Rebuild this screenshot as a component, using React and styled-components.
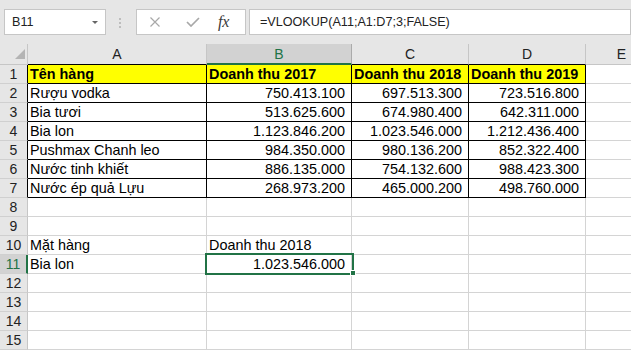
import styled, { createGlobalStyle } from 'styled-components'

const GlobalStyle = createGlobalStyle`
    body {
        margin: 0;
        background: #fff;
        overflow: hidden;
    }
`

const Shell = styled.div`
    width: 631px;
    height: 350px;
    overflow: hidden;
    background: #fff;
    font-family: "Liberation Sans", Arial, sans-serif;
`

const FormulaBar = styled.div`
    display: flex;
    align-items: flex-start;
    height: 44px;
    box-sizing: border-box;
    padding: 9px 0 0 4px;
    background: #e6e6e6;
`

const NameBox = styled.div`
    width: 102px;
    height: 26px;
    box-sizing: border-box;
    border: 1px solid #c6c6c6;
    background: #fff;
    display: flex;
    align-items: center;
    justify-content: space-between;
    padding: 0 7px 0 7px;
    font-size: 12.6px;
    color: #222;
`

const DropArrow = styled.span`
    width: 0;
    height: 0;
    border-left: 3px solid transparent;
    border-right: 3px solid transparent;
    border-top: 3px solid #666;
`

const Grip = styled.div`
    display: flex;
    flex-direction: column;
    gap: 2px;
    margin: 9px 0 0 13px;
`

const Dot = styled.span`
    width: 2px;
    height: 2px;
    background: #bdbdbd;
`

const ButtonGroup = styled.div`
    width: 110px;
    height: 26px;
    box-sizing: border-box;
    margin-left: 15px;
    border: 1px solid #c6c6c6;
    background: #fff;
    display: flex;
    align-items: center;
`

const IconSlot = styled.span`
    display: flex;
    align-items: center;
    margin-left: ${p => p.$gap}px;
`

const Fx = styled.span`
    font-family: "Liberation Serif", "Times New Roman", serif;
    font-style: italic;
    font-size: 16px;
    color: #3a3a3a;
    letter-spacing: -0.3px;
`

const FormulaInput = styled.div`
    flex: 1;
    height: 26px;
    box-sizing: border-box;
    margin-left: 3px;
    border: 1px solid #c6c6c6;
    background: #fff;
    display: flex;
    align-items: center;
    padding-left: 10px;
    font-size: 12.6px;
    color: #222;
    white-space: nowrap;
`

const Sheet = styled.div`
    display: grid;
    grid-template-columns: 28px 179px 145px 117px 117px 72px;
    grid-auto-rows: 19px;
    grid-template-rows: 21px;
    width: 658px;
`

const Corner = styled.div`
    box-sizing: border-box;
    background: #e6e6e6;
    border-right: 1px solid #c6c6c6;
    border-bottom: 1px solid #c6c6c6;
    display: flex;
    justify-content: flex-end;
    align-items: flex-end;
    padding: 0 2px 5px 0;
`

const ColHead = styled.div`
    box-sizing: border-box;
    background: ${p => (p.$active ? '#d2d2d2' : '#e6e6e6')};
    color: ${p => (p.$active ? '#217346' : '#222')};
    border-right: 1px solid ${p => (p.$active ? '#ababab' : '#c6c6c6')};
    border-bottom: ${p => (p.$active ? '2px solid #217346' : `1px solid ${p.$edge || '#c6c6c6'}`)};
    display: flex;
    align-items: center;
    justify-content: center;
    font-size: 14px;
`

const RowHead = styled.div`
    box-sizing: border-box;
    background: ${p => (p.$active ? '#d2d2d2' : '#e6e6e6')};
    color: ${p => (p.$active ? '#217346' : '#222')};
    border-right: ${p => (p.$active ? '2px solid #217346' : `1px solid ${p.$edge || '#c6c6c6'}`)};
    border-bottom: 1px solid #d0d0d0;
    display: flex;
    align-items: center;
    justify-content: center;
    font-size: 14px;
    line-height: 18px;
`

const Cell = styled.div`
    position: relative;
    box-sizing: border-box;
    border-right: 1px solid ${p => (p.$boxed ? '#000' : '#d4d4d4')};
    border-bottom: 1px solid ${p => (p.$boxed ? '#000' : '#d4d4d4')};
    background: ${p => p.$fill || '#fff'};
    font-weight: ${p => (p.$bold ? 700 : 400)};
    text-align: ${p => (p.$right ? 'right' : 'left')};
    padding: 0 6px 0 2px;
    font-size: 14.4px;
    line-height: 18px;
    color: #000;
    white-space: nowrap;
`

const Selection = styled.div`
    position: absolute;
    left: -2px;
    top: -2px;
    right: -3px;
    bottom: -2px;
    border: 2px solid #217346;
    pointer-events: none;
    z-index: 2;
`

const Handle = styled.span`
    position: absolute;
    right: -4px;
    bottom: -3px;
    width: 6px;
    height: 6px;
    box-sizing: border-box;
    background: #217346;
    border: 1px solid #fff;
`

const columns = ['A', 'B', 'C', 'D', 'E']

const rows = [
    ['Tên hàng', 'Doanh thu 2017', 'Doanh thu 2018', 'Doanh thu 2019'],
    ['Rượu vodka', '750.413.100', '697.513.300', '723.516.800'],
    ['Bia tươi', '513.625.600', '674.980.400', '642.311.000'],
    ['Bia lon', '1.123.846.200', '1.023.546.000', '1.212.436.400'],
    ['Pushmax Chanh leo', '984.350.000', '980.136.200', '852.322.400'],
    ['Nước tinh khiết', '886.135.000', '754.132.600', '988.423.300'],
    ['Nước ép quả Lựu', '268.973.200', '465.000.200', '498.760.000'],
    [],
    [],
    ['Mặt hàng', 'Doanh thu 2018'],
    ['Bia lon', '1.023.546.000'],
    [],
    [],
    [],
    [],
]

const isNumber = (v) => /^[\d.]+$/.test(v || '')

const App = () => {
    return (
        <Shell>
            <GlobalStyle />
            <FormulaBar>
                <NameBox>
                    B11
                    <DropArrow />
                </NameBox>
                <Grip>
                    <Dot />
                    <Dot />
                    <Dot />
                </Grip>
                <ButtonGroup>
                    <IconSlot $gap={13}>
                        <svg width="10" height="10" viewBox="0 0 10 10">
                            <path d="M0.5 0.5 L9.5 9.5 M9.5 0.5 L0.5 9.5" stroke="#a8a8a8" strokeWidth="1.2" />
                        </svg>
                    </IconSlot>
                    <IconSlot $gap={26}>
                        <svg width="14" height="10" viewBox="0 0 14 10">
                            <path d="M1 5 L5 9 L13 1" fill="none" stroke="#a8a8a8" strokeWidth="1.7" />
                        </svg>
                    </IconSlot>
                    <IconSlot $gap={18}>
                        <Fx>fx</Fx>
                    </IconSlot>
                </ButtonGroup>
                <FormulaInput>=VLOOKUP(A11;A1:D7;3;FALSE)</FormulaInput>
            </FormulaBar>

            <Sheet>
                <Corner>
                    <svg width="10" height="10" viewBox="0 0 10 10">
                        <path d="M10 0 L10 10 L0 10 Z" fill="#b4b4b4" />
                    </svg>
                </Corner>
                {columns.map((c, i) => (
                    <ColHead key={c} $active={c === 'B'} $edge={i < 4 ? '#000' : null}>
                        {c}
                    </ColHead>
                ))}

                {rows.map((row, r) => {
                    const inTable = r < 7
                    const selectedRow = r === 10
                    return [
                        <RowHead key={`h${r}`} $active={selectedRow} $edge={inTable ? '#000' : null}>
                            {r + 1}
                        </RowHead>,
                        ...columns.map((c, ci) => {
                            const value = row[ci]
                            const selected = selectedRow && c === 'B'
                            return (
                                <Cell
                                    key={`${r}${c}`}
                                    $boxed={inTable && ci < 4}
                                    $fill={r === 0 && ci < 4 ? '#ffff00' : null}
                                    $bold={r === 0}
                                    $right={isNumber(value)}
                                >
                                    {value}
                                    {selected && (
                                        <Selection>
                                            <Handle />
                                        </Selection>
                                    )}
                                </Cell>
                            )
                        }),
                    ]
                })}
            </Sheet>
        </Shell>
    )
}

export default App
